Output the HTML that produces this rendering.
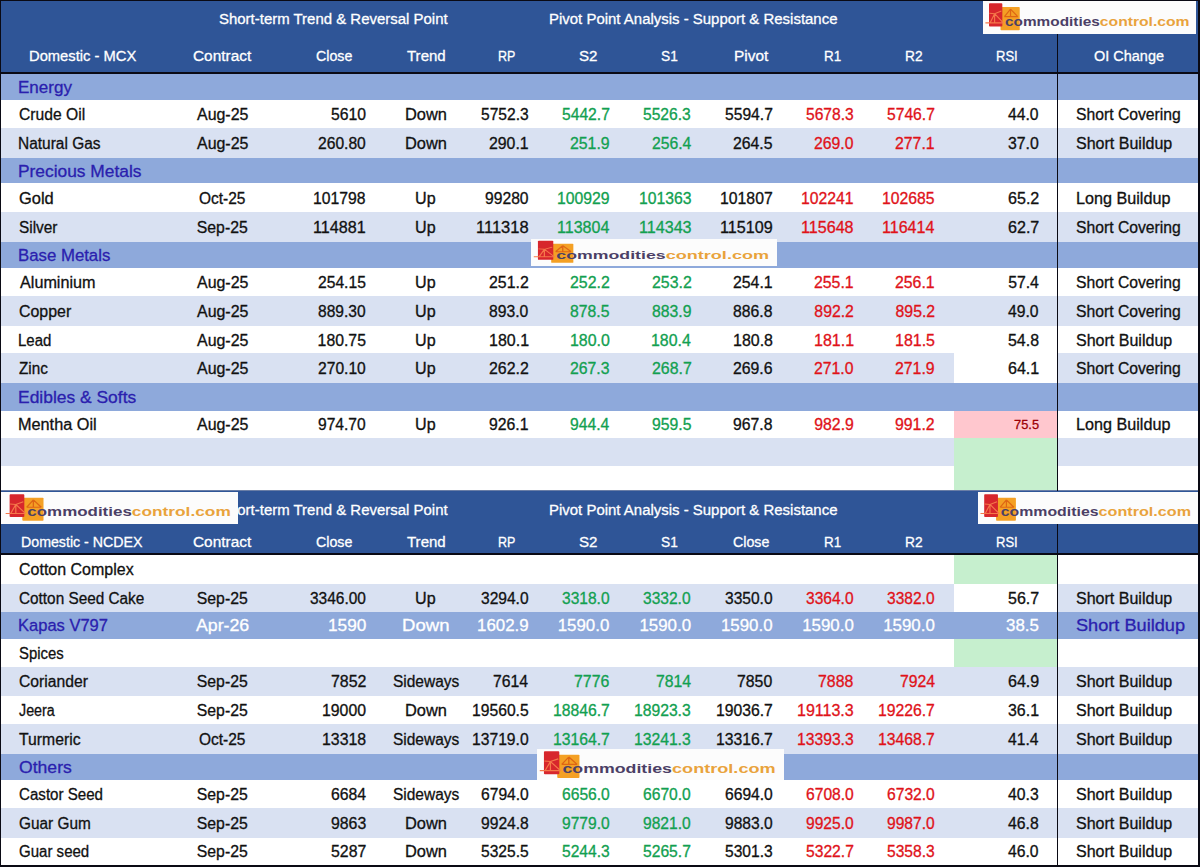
<!DOCTYPE html>
<html><head><meta charset="utf-8"><style>
html,body{margin:0;padding:0;width:1200px;height:867px;overflow:hidden;background:#fff;}
body{position:relative;font-family:"Liberation Sans",sans-serif;}
div,span{position:absolute;}
span{white-space:pre;display:block;}
</style></head><body>
<div style="left:0.00px;top:0.00px;width:1200.00px;height:72.30px;background:#2F5597;"></div>
<span style="left:218.68px;top:-0.60px;height:40px;line-height:40px;font-size:15.5px;color:#FFFFFF;transform:scaleX(0.965);transform-origin:0 0;-webkit-text-stroke:0.3px #FFFFFF;">Short-term Trend &amp; Reversal Point</span>
<span style="left:548.72px;top:-0.60px;height:40px;line-height:40px;font-size:15.5px;color:#FFFFFF;transform:scaleX(0.965);transform-origin:0 0;-webkit-text-stroke:0.3px #FFFFFF;">Pivot Point Analysis - Support &amp; Resistance</span>
<span style="left:28.85px;top:36.00px;height:40px;line-height:40px;font-size:15.5px;color:#FFFFFF;transform:scaleX(0.9508823198831068);transform-origin:0 0;-webkit-text-stroke:0.3px #FFFFFF;">Domestic - MCX</span>
<span style="left:193.21px;top:36.00px;height:40px;line-height:40px;font-size:15.5px;color:#FFFFFF;transform:scaleX(0.9928893513701005);transform-origin:0 0;-webkit-text-stroke:0.3px #FFFFFF;">Contract</span>
<span style="left:315.54px;top:36.00px;height:40px;line-height:40px;font-size:15.5px;color:#FFFFFF;transform:scaleX(0.9160505136426094);transform-origin:0 0;-webkit-text-stroke:0.3px #FFFFFF;">Close</span>
<span style="left:407.20px;top:36.00px;height:40px;line-height:40px;font-size:15.5px;color:#FFFFFF;transform:scaleX(0.969681298080031);transform-origin:0 0;-webkit-text-stroke:0.3px #FFFFFF;">Trend</span>
<span style="left:498.22px;top:36.00px;height:40px;line-height:40px;font-size:15.5px;color:#FFFFFF;transform:scaleX(0.8096645675363066);transform-origin:0 0;-webkit-text-stroke:0.3px #FFFFFF;">RP</span>
<span style="left:579.32px;top:36.00px;height:40px;line-height:40px;font-size:15.5px;color:#FFFFFF;transform:scaleX(0.974910394265233);transform-origin:0 0;-webkit-text-stroke:0.3px #FFFFFF;">S2</span>
<span style="left:661.38px;top:36.00px;height:40px;line-height:40px;font-size:15.5px;color:#FFFFFF;transform:scaleX(0.8849557522123893);transform-origin:0 0;-webkit-text-stroke:0.3px #FFFFFF;">S1</span>
<span style="left:733.76px;top:36.00px;height:40px;line-height:40px;font-size:15.5px;color:#FFFFFF;transform:scaleX(0.9972048047140593);transform-origin:0 0;-webkit-text-stroke:0.3px #FFFFFF;">Pivot</span>
<span style="left:823.92px;top:36.00px;height:40px;line-height:40px;font-size:15.5px;color:#FFFFFF;transform:scaleX(0.8695652173913044);transform-origin:0 0;-webkit-text-stroke:0.3px #FFFFFF;">R1</span>
<span style="left:905.12px;top:36.00px;height:40px;line-height:40px;font-size:15.5px;color:#FFFFFF;transform:scaleX(0.8874489364699254);transform-origin:0 0;-webkit-text-stroke:0.3px #FFFFFF;">R2</span>
<span style="left:995.71px;top:36.00px;height:40px;line-height:40px;font-size:15.5px;color:#FFFFFF;transform:scaleX(0.8415147265077139);transform-origin:0 0;-webkit-text-stroke:0.3px #FFFFFF;">RSI</span>
<span style="left:1094.37px;top:36.00px;height:40px;line-height:40px;font-size:15.5px;color:#FFFFFF;transform:scaleX(0.933786078098472);transform-origin:0 0;-webkit-text-stroke:0.3px #FFFFFF;">OI Change</span>
<div style="left:0.00px;top:72.30px;width:1200.00px;height:2.00px;background:#0a0a14;"></div>
<div style="left:0.00px;top:74.30px;width:1200.00px;height:25.70px;background:#8EA9DB;"></div>
<span style="left:18.24px;top:67.45px;height:40px;line-height:40px;font-size:17.2px;color:#2A20AE;transform:scaleX(0.989689169865282);transform-origin:0 0;-webkit-text-stroke:0.3px #2A20AE;">Energy</span>
<div style="left:0.00px;top:100.00px;width:1200.00px;height:27.60px;background:#FFFFFF;"></div>
<span style="left:18.82px;top:94.90px;height:40px;line-height:40px;font-size:15.8px;color:#111111;transform:scaleX(0.9913813040595753);transform-origin:0 0;-webkit-text-stroke:0.3px #111111;">Crude Oil</span>
<span style="left:196.90px;top:94.90px;height:40px;line-height:40px;font-size:15.8px;color:#111111;transform:scaleX(1.0094);transform-origin:0 0;-webkit-text-stroke:0.3px #111111;">Aug-25</span>
<span style="left:330.77px;top:94.90px;height:40px;line-height:40px;font-size:15.8px;color:#111111;transform:scaleX(0.9979393582572859);transform-origin:0 0;-webkit-text-stroke:0.3px #111111;">5610</span>
<span style="left:404.87px;top:94.90px;height:40px;line-height:40px;font-size:15.8px;color:#111111;transform:scaleX(1.0388);transform-origin:0 0;-webkit-text-stroke:0.3px #111111;">Down</span>
<span style="left:480.68px;top:94.90px;height:40px;line-height:40px;font-size:15.8px;color:#111111;transform:scaleX(0.987596635799847);transform-origin:0 0;-webkit-text-stroke:0.3px #111111;">5752.3</span>
<span style="left:561.67px;top:94.90px;height:40px;line-height:40px;font-size:15.8px;color:#12A050;transform:scaleX(0.9909218769978265);transform-origin:0 0;-webkit-text-stroke:0.3px #12A050;">5442.7</span>
<span style="left:643.38px;top:94.90px;height:40px;line-height:40px;font-size:15.8px;color:#12A050;transform:scaleX(0.987596635799847);transform-origin:0 0;-webkit-text-stroke:0.3px #12A050;">5526.3</span>
<span style="left:724.77px;top:94.90px;height:40px;line-height:40px;font-size:15.8px;color:#111111;transform:scaleX(0.9909218769978265);transform-origin:0 0;-webkit-text-stroke:0.3px #111111;">5594.7</span>
<span style="left:805.98px;top:94.90px;height:40px;line-height:40px;font-size:15.8px;color:#E01219;transform:scaleX(0.987596635799847);transform-origin:0 0;-webkit-text-stroke:0.3px #E01219;">5678.3</span>
<span style="left:887.17px;top:94.90px;height:40px;line-height:40px;font-size:15.8px;color:#E01219;transform:scaleX(0.9909218769978265);transform-origin:0 0;-webkit-text-stroke:0.3px #E01219;">5746.7</span>
<span style="left:1008.49px;top:94.90px;height:40px;line-height:40px;font-size:15.8px;color:#111111;transform:scaleX(0.9945750452079567);transform-origin:0 0;-webkit-text-stroke:0.3px #111111;">44.0</span>
<span style="left:1076.29px;top:94.90px;height:40px;line-height:40px;font-size:15.8px;color:#111111;transform:scaleX(0.9946999999999999);transform-origin:0 0;-webkit-text-stroke:0.3px #111111;">Short Covering</span>
<div style="left:0.00px;top:127.60px;width:1200.00px;height:30.10px;background:#D9E1F2;"></div>
<span style="left:18.36px;top:123.75px;height:40px;line-height:40px;font-size:15.8px;color:#111111;transform:scaleX(0.9796789369028566);transform-origin:0 0;-webkit-text-stroke:0.3px #111111;">Natural Gas</span>
<span style="left:196.90px;top:123.75px;height:40px;line-height:40px;font-size:15.8px;color:#111111;transform:scaleX(1.0094);transform-origin:0 0;-webkit-text-stroke:0.3px #111111;">Aug-25</span>
<span style="left:318.02px;top:123.75px;height:40px;line-height:40px;font-size:15.8px;color:#111111;transform:scaleX(0.9892564620785023);transform-origin:0 0;-webkit-text-stroke:0.3px #111111;">260.80</span>
<span style="left:404.87px;top:123.75px;height:40px;line-height:40px;font-size:15.8px;color:#111111;transform:scaleX(1.0388);transform-origin:0 0;-webkit-text-stroke:0.3px #111111;">Down</span>
<span style="left:488.91px;top:123.75px;height:40px;line-height:40px;font-size:15.8px;color:#111111;transform:scaleX(1.0026579646832812);transform-origin:0 0;-webkit-text-stroke:0.3px #111111;">290.1</span>
<span style="left:569.91px;top:123.75px;height:40px;line-height:40px;font-size:15.8px;color:#12A050;transform:scaleX(1.0026579646832812);transform-origin:0 0;-webkit-text-stroke:0.3px #12A050;">251.9</span>
<span style="left:651.61px;top:123.75px;height:40px;line-height:40px;font-size:15.8px;color:#12A050;transform:scaleX(0.994388620644656);transform-origin:0 0;-webkit-text-stroke:0.3px #12A050;">256.4</span>
<span style="left:733.01px;top:123.75px;height:40px;line-height:40px;font-size:15.8px;color:#111111;-webkit-text-stroke:0.3px #111111;">264.5</span>
<span style="left:814.21px;top:123.75px;height:40px;line-height:40px;font-size:15.8px;color:#E01219;transform:scaleX(0.9985061718688576);transform-origin:0 0;-webkit-text-stroke:0.3px #E01219;">269.0</span>
<span style="left:895.41px;top:123.75px;height:40px;line-height:40px;font-size:15.8px;color:#E01219;transform:scaleX(1.0026579646832812);transform-origin:0 0;-webkit-text-stroke:0.3px #E01219;">277.1</span>
<span style="left:1008.25px;top:123.75px;height:40px;line-height:40px;font-size:15.8px;color:#111111;transform:scaleX(1.0025316455696203);transform-origin:0 0;-webkit-text-stroke:0.3px #111111;">37.0</span>
<span style="left:1076.28px;top:123.75px;height:40px;line-height:40px;font-size:15.8px;color:#111111;transform:scaleX(1.0143);transform-origin:0 0;-webkit-text-stroke:0.3px #111111;">Short Buildup</span>
<div style="left:0.00px;top:157.70px;width:1200.00px;height:25.80px;background:#8EA9DB;"></div>
<span style="left:18.21px;top:150.90px;height:40px;line-height:40px;font-size:17.2px;color:#2A20AE;transform:scaleX(1.0099667774086378);transform-origin:0 0;-webkit-text-stroke:0.3px #2A20AE;">Precious Metals</span>
<div style="left:0.00px;top:183.50px;width:1200.00px;height:28.30px;background:#FFFFFF;"></div>
<span style="left:18.78px;top:178.75px;height:40px;line-height:40px;font-size:15.8px;color:#111111;transform:scaleX(1.0411392405063291);transform-origin:0 0;-webkit-text-stroke:0.3px #111111;">Gold</span>
<span style="left:199.04px;top:178.75px;height:40px;line-height:40px;font-size:15.8px;color:#111111;transform:scaleX(0.98);transform-origin:0 0;-webkit-text-stroke:0.3px #111111;">Oct-25</span>
<span style="left:313.42px;top:178.75px;height:40px;line-height:40px;font-size:15.8px;color:#111111;transform:scaleX(0.9965406085384072);transform-origin:0 0;-webkit-text-stroke:0.3px #111111;">101798</span>
<span style="left:415.45px;top:178.75px;height:40px;line-height:40px;font-size:15.8px;color:#111111;transform:scaleX(1.0192);transform-origin:0 0;-webkit-text-stroke:0.3px #111111;">Up</span>
<span style="left:484.79px;top:178.75px;height:40px;line-height:40px;font-size:15.8px;color:#111111;transform:scaleX(0.991561181434599);transform-origin:0 0;-webkit-text-stroke:0.3px #111111;">99280</span>
<span style="left:556.92px;top:178.75px;height:40px;line-height:40px;font-size:15.8px;color:#12A050;transform:scaleX(0.9980904384117173);transform-origin:0 0;-webkit-text-stroke:0.3px #12A050;">100929</span>
<span style="left:638.62px;top:178.75px;height:40px;line-height:40px;font-size:15.8px;color:#12A050;transform:scaleX(0.9965406085384072);transform-origin:0 0;-webkit-text-stroke:0.3px #12A050;">101363</span>
<span style="left:720.02px;top:178.75px;height:40px;line-height:40px;font-size:15.8px;color:#111111;-webkit-text-stroke:0.3px #111111;">101807</span>
<span style="left:801.22px;top:178.75px;height:40px;line-height:40px;font-size:15.8px;color:#E01219;transform:scaleX(0.9980904384117173);transform-origin:0 0;-webkit-text-stroke:0.3px #E01219;">102241</span>
<span style="left:882.42px;top:178.75px;height:40px;line-height:40px;font-size:15.8px;color:#E01219;transform:scaleX(0.9965406085384072);transform-origin:0 0;-webkit-text-stroke:0.3px #E01219;">102685</span>
<span style="left:1008.00px;top:178.75px;height:40px;line-height:40px;font-size:15.8px;color:#111111;transform:scaleX(1.018832973139858);transform-origin:0 0;-webkit-text-stroke:0.3px #111111;">65.2</span>
<span style="left:1075.71px;top:178.75px;height:40px;line-height:40px;font-size:15.8px;color:#111111;transform:scaleX(1.0241);transform-origin:0 0;-webkit-text-stroke:0.3px #111111;">Long Buildup</span>
<div style="left:0.00px;top:211.80px;width:1200.00px;height:29.90px;background:#D9E1F2;"></div>
<span style="left:18.91px;top:207.85px;height:40px;line-height:40px;font-size:15.8px;color:#111111;transform:scaleX(0.9733115891382567);transform-origin:0 0;-webkit-text-stroke:0.3px #111111;">Silver</span>
<span style="left:196.79px;top:207.85px;height:40px;line-height:40px;font-size:15.8px;color:#111111;-webkit-text-stroke:0.3px #111111;">Sep-25</span>
<span style="left:313.39px;top:207.85px;height:40px;line-height:40px;font-size:15.8px;color:#111111;transform:scaleX(1.021930178182698);transform-origin:0 0;-webkit-text-stroke:0.3px #111111;">114881</span>
<span style="left:415.45px;top:207.85px;height:40px;line-height:40px;font-size:15.8px;color:#111111;transform:scaleX(1.0192);transform-origin:0 0;-webkit-text-stroke:0.3px #111111;">Up</span>
<span style="left:475.86px;top:207.85px;height:40px;line-height:40px;font-size:15.8px;color:#111111;transform:scaleX(1.0452315177503815);transform-origin:0 0;-webkit-text-stroke:0.3px #111111;">111318</span>
<span style="left:556.90px;top:207.85px;height:40px;line-height:40px;font-size:15.8px;color:#12A050;transform:scaleX(1.0154622656625543);transform-origin:0 0;-webkit-text-stroke:0.3px #12A050;">113804</span>
<span style="left:638.59px;top:207.85px;height:40px;line-height:40px;font-size:15.8px;color:#12A050;transform:scaleX(1.0203054879153166);transform-origin:0 0;-webkit-text-stroke:0.3px #12A050;">114343</span>
<span style="left:719.99px;top:207.85px;height:40px;line-height:40px;font-size:15.8px;color:#111111;transform:scaleX(1.021930178182698);transform-origin:0 0;-webkit-text-stroke:0.3px #111111;">115109</span>
<span style="left:801.19px;top:207.85px;height:40px;line-height:40px;font-size:15.8px;color:#E01219;transform:scaleX(1.0203054879153166);transform-origin:0 0;-webkit-text-stroke:0.3px #E01219;">115648</span>
<span style="left:882.40px;top:207.85px;height:40px;line-height:40px;font-size:15.8px;color:#E01219;transform:scaleX(1.0154622656625543);transform-origin:0 0;-webkit-text-stroke:0.3px #E01219;">116414</span>
<span style="left:1008.00px;top:207.85px;height:40px;line-height:40px;font-size:15.8px;color:#111111;transform:scaleX(1.018832973139858);transform-origin:0 0;-webkit-text-stroke:0.3px #111111;">62.7</span>
<span style="left:1076.29px;top:207.85px;height:40px;line-height:40px;font-size:15.8px;color:#111111;transform:scaleX(0.9946999999999999);transform-origin:0 0;-webkit-text-stroke:0.3px #111111;">Short Covering</span>
<div style="left:0.00px;top:241.70px;width:1200.00px;height:26.00px;background:#8EA9DB;"></div>
<span style="left:18.26px;top:235.00px;height:40px;line-height:40px;font-size:17.2px;color:#2A20AE;transform:scaleX(0.976183285153385);transform-origin:0 0;-webkit-text-stroke:0.3px #2A20AE;">Base Metals</span>
<div style="left:0.00px;top:267.70px;width:1200.00px;height:28.30px;background:#FFFFFF;"></div>
<span style="left:19.60px;top:262.95px;height:40px;line-height:40px;font-size:15.8px;color:#111111;transform:scaleX(1.0239283112742064);transform-origin:0 0;-webkit-text-stroke:0.3px #111111;">Aluminium</span>
<span style="left:196.90px;top:262.95px;height:40px;line-height:40px;font-size:15.8px;color:#111111;transform:scaleX(1.0094);transform-origin:0 0;-webkit-text-stroke:0.3px #111111;">Aug-25</span>
<span style="left:318.02px;top:262.95px;height:40px;line-height:40px;font-size:15.8px;color:#111111;transform:scaleX(0.9909218769978263);transform-origin:0 0;-webkit-text-stroke:0.3px #111111;">254.15</span>
<span style="left:415.45px;top:262.95px;height:40px;line-height:40px;font-size:15.8px;color:#111111;transform:scaleX(1.0192);transform-origin:0 0;-webkit-text-stroke:0.3px #111111;">Up</span>
<span style="left:488.91px;top:262.95px;height:40px;line-height:40px;font-size:15.8px;color:#111111;transform:scaleX(1.0047468354430378);transform-origin:0 0;-webkit-text-stroke:0.3px #111111;">251.2</span>
<span style="left:569.91px;top:262.95px;height:40px;line-height:40px;font-size:15.8px;color:#12A050;transform:scaleX(1.0047468354430378);transform-origin:0 0;-webkit-text-stroke:0.3px #12A050;">252.2</span>
<span style="left:651.61px;top:262.95px;height:40px;line-height:40px;font-size:15.8px;color:#12A050;transform:scaleX(1.0047468354430378);transform-origin:0 0;-webkit-text-stroke:0.3px #12A050;">253.2</span>
<span style="left:733.01px;top:262.95px;height:40px;line-height:40px;font-size:15.8px;color:#111111;transform:scaleX(1.0026579646832812);transform-origin:0 0;-webkit-text-stroke:0.3px #111111;">254.1</span>
<span style="left:814.21px;top:262.95px;height:40px;line-height:40px;font-size:15.8px;color:#E01219;transform:scaleX(1.0026579646832812);transform-origin:0 0;-webkit-text-stroke:0.3px #E01219;">255.1</span>
<span style="left:895.41px;top:262.95px;height:40px;line-height:40px;font-size:15.8px;color:#E01219;transform:scaleX(1.0026579646832812);transform-origin:0 0;-webkit-text-stroke:0.3px #E01219;">256.1</span>
<span style="left:1008.17px;top:262.95px;height:40px;line-height:40px;font-size:15.8px;color:#111111;-webkit-text-stroke:0.3px #111111;">57.4</span>
<span style="left:1076.29px;top:262.95px;height:40px;line-height:40px;font-size:15.8px;color:#111111;transform:scaleX(0.9946999999999999);transform-origin:0 0;-webkit-text-stroke:0.3px #111111;">Short Covering</span>
<div style="left:0.00px;top:296.00px;width:1200.00px;height:30.00px;background:#D9E1F2;"></div>
<span style="left:18.80px;top:292.10px;height:40px;line-height:40px;font-size:15.8px;color:#111111;transform:scaleX(1.0089178494792999);transform-origin:0 0;-webkit-text-stroke:0.3px #111111;">Copper</span>
<span style="left:196.90px;top:292.10px;height:40px;line-height:40px;font-size:15.8px;color:#111111;transform:scaleX(1.0094);transform-origin:0 0;-webkit-text-stroke:0.3px #111111;">Aug-25</span>
<span style="left:318.18px;top:292.10px;height:40px;line-height:40px;font-size:15.8px;color:#111111;transform:scaleX(0.9859423700782394);transform-origin:0 0;-webkit-text-stroke:0.3px #111111;">889.30</span>
<span style="left:415.45px;top:292.10px;height:40px;line-height:40px;font-size:15.8px;color:#111111;transform:scaleX(1.0192);transform-origin:0 0;-webkit-text-stroke:0.3px #111111;">Up</span>
<span style="left:489.07px;top:292.10px;height:40px;line-height:40px;font-size:15.8px;color:#111111;transform:scaleX(0.9943886206446563);transform-origin:0 0;-webkit-text-stroke:0.3px #111111;">893.0</span>
<span style="left:570.07px;top:292.10px;height:40px;line-height:40px;font-size:15.8px;color:#12A050;transform:scaleX(0.9964431425881369);transform-origin:0 0;-webkit-text-stroke:0.3px #12A050;">878.5</span>
<span style="left:651.77px;top:292.10px;height:40px;line-height:40px;font-size:15.8px;color:#12A050;transform:scaleX(0.9985061718688576);transform-origin:0 0;-webkit-text-stroke:0.3px #12A050;">883.9</span>
<span style="left:733.17px;top:292.10px;height:40px;line-height:40px;font-size:15.8px;color:#111111;transform:scaleX(0.9964431425881369);transform-origin:0 0;-webkit-text-stroke:0.3px #111111;">886.8</span>
<span style="left:814.37px;top:292.10px;height:40px;line-height:40px;font-size:15.8px;color:#E01219;-webkit-text-stroke:0.3px #E01219;">892.2</span>
<span style="left:895.57px;top:292.10px;height:40px;line-height:40px;font-size:15.8px;color:#E01219;-webkit-text-stroke:0.3px #E01219;">895.2</span>
<span style="left:1008.49px;top:292.10px;height:40px;line-height:40px;font-size:15.8px;color:#111111;transform:scaleX(0.9945750452079567);transform-origin:0 0;-webkit-text-stroke:0.3px #111111;">49.0</span>
<span style="left:1076.29px;top:292.10px;height:40px;line-height:40px;font-size:15.8px;color:#111111;transform:scaleX(0.9946999999999999);transform-origin:0 0;-webkit-text-stroke:0.3px #111111;">Short Covering</span>
<div style="left:0.00px;top:326.00px;width:1200.00px;height:27.00px;background:#FFFFFF;"></div>
<span style="left:18.40px;top:320.60px;height:40px;line-height:40px;font-size:15.8px;color:#111111;transform:scaleX(0.9486082020459582);transform-origin:0 0;-webkit-text-stroke:0.3px #111111;">Lead</span>
<span style="left:196.90px;top:320.60px;height:40px;line-height:40px;font-size:15.8px;color:#111111;transform:scaleX(1.0094);transform-origin:0 0;-webkit-text-stroke:0.3px #111111;">Aug-25</span>
<span style="left:317.62px;top:320.60px;height:40px;line-height:40px;font-size:15.8px;color:#111111;-webkit-text-stroke:0.3px #111111;">180.75</span>
<span style="left:415.45px;top:320.60px;height:40px;line-height:40px;font-size:15.8px;color:#111111;transform:scaleX(1.0192);transform-origin:0 0;-webkit-text-stroke:0.3px #111111;">Up</span>
<span style="left:488.50px;top:320.60px;height:40px;line-height:40px;font-size:15.8px;color:#111111;transform:scaleX(1.0131900861610468);transform-origin:0 0;-webkit-text-stroke:0.3px #111111;">180.1</span>
<span style="left:569.50px;top:320.60px;height:40px;line-height:40px;font-size:15.8px;color:#12A050;transform:scaleX(1.0089507970976115);transform-origin:0 0;-webkit-text-stroke:0.3px #12A050;">180.0</span>
<span style="left:651.21px;top:320.60px;height:40px;line-height:40px;font-size:15.8px;color:#12A050;transform:scaleX(1.004746835443038);transform-origin:0 0;-webkit-text-stroke:0.3px #12A050;">180.4</span>
<span style="left:732.60px;top:320.60px;height:40px;line-height:40px;font-size:15.8px;color:#111111;transform:scaleX(1.011065997930101);transform-origin:0 0;-webkit-text-stroke:0.3px #111111;">180.8</span>
<span style="left:813.80px;top:320.60px;height:40px;line-height:40px;font-size:15.8px;color:#E01219;transform:scaleX(1.0131900861610468);transform-origin:0 0;-webkit-text-stroke:0.3px #E01219;">181.1</span>
<span style="left:895.00px;top:320.60px;height:40px;line-height:40px;font-size:15.8px;color:#E01219;transform:scaleX(1.011065997930101);transform-origin:0 0;-webkit-text-stroke:0.3px #E01219;">181.5</span>
<span style="left:1008.16px;top:320.60px;height:40px;line-height:40px;font-size:15.8px;color:#111111;transform:scaleX(1.0079071503716022);transform-origin:0 0;-webkit-text-stroke:0.3px #111111;">54.8</span>
<span style="left:1076.28px;top:320.60px;height:40px;line-height:40px;font-size:15.8px;color:#111111;transform:scaleX(1.0143);transform-origin:0 0;-webkit-text-stroke:0.3px #111111;">Short Buildup</span>
<div style="left:0.00px;top:353.00px;width:1200.00px;height:30.00px;background:#D9E1F2;"></div>
<div style="left:953.60px;top:353.00px;width:103.00px;height:30.00px;background:#FFFFFF;"></div>
<span style="left:19.14px;top:349.10px;height:40px;line-height:40px;font-size:15.8px;color:#111111;transform:scaleX(0.9657503535336115);transform-origin:0 0;-webkit-text-stroke:0.3px #111111;">Zinc</span>
<span style="left:196.90px;top:349.10px;height:40px;line-height:40px;font-size:15.8px;color:#111111;transform:scaleX(1.0094);transform-origin:0 0;-webkit-text-stroke:0.3px #111111;">Aug-25</span>
<span style="left:318.02px;top:349.10px;height:40px;line-height:40px;font-size:15.8px;color:#111111;transform:scaleX(0.9892564620785023);transform-origin:0 0;-webkit-text-stroke:0.3px #111111;">270.10</span>
<span style="left:415.45px;top:349.10px;height:40px;line-height:40px;font-size:15.8px;color:#111111;transform:scaleX(1.0192);transform-origin:0 0;-webkit-text-stroke:0.3px #111111;">Up</span>
<span style="left:488.91px;top:349.10px;height:40px;line-height:40px;font-size:15.8px;color:#111111;transform:scaleX(1.0047468354430378);transform-origin:0 0;-webkit-text-stroke:0.3px #111111;">262.2</span>
<span style="left:569.91px;top:349.10px;height:40px;line-height:40px;font-size:15.8px;color:#12A050;-webkit-text-stroke:0.3px #12A050;">267.3</span>
<span style="left:651.61px;top:349.10px;height:40px;line-height:40px;font-size:15.8px;color:#12A050;transform:scaleX(1.0047468354430378);transform-origin:0 0;-webkit-text-stroke:0.3px #12A050;">268.7</span>
<span style="left:733.01px;top:349.10px;height:40px;line-height:40px;font-size:15.8px;color:#111111;-webkit-text-stroke:0.3px #111111;">269.6</span>
<span style="left:814.21px;top:349.10px;height:40px;line-height:40px;font-size:15.8px;color:#E01219;transform:scaleX(0.9985061718688576);transform-origin:0 0;-webkit-text-stroke:0.3px #E01219;">271.0</span>
<span style="left:895.41px;top:349.10px;height:40px;line-height:40px;font-size:15.8px;color:#E01219;transform:scaleX(1.0026579646832812);transform-origin:0 0;-webkit-text-stroke:0.3px #E01219;">271.9</span>
<span style="left:1008.00px;top:349.10px;height:40px;line-height:40px;font-size:15.8px;color:#111111;transform:scaleX(1.0160793705097504);transform-origin:0 0;-webkit-text-stroke:0.3px #111111;">64.1</span>
<span style="left:1076.29px;top:349.10px;height:40px;line-height:40px;font-size:15.8px;color:#111111;transform:scaleX(0.9946999999999999);transform-origin:0 0;-webkit-text-stroke:0.3px #111111;">Short Covering</span>
<div style="left:0.00px;top:383.00px;width:1200.00px;height:27.50px;background:#8EA9DB;"></div>
<span style="left:18.20px;top:377.05px;height:40px;line-height:40px;font-size:17.2px;color:#2A20AE;transform:scaleX(1.014061654948621);transform-origin:0 0;-webkit-text-stroke:0.3px #2A20AE;">Edibles &amp; Softs</span>
<div style="left:0.00px;top:410.50px;width:1200.00px;height:27.00px;background:#FFFFFF;"></div>
<div style="left:953.60px;top:410.50px;width:103.00px;height:27.00px;background:#FFC7CE;"></div>
<span style="left:18.30px;top:405.10px;height:40px;line-height:40px;font-size:15.8px;color:#111111;transform:scaleX(1.0289870718739036);transform-origin:0 0;-webkit-text-stroke:0.3px #111111;">Mentha Oil</span>
<span style="left:196.90px;top:405.10px;height:40px;line-height:40px;font-size:15.8px;color:#111111;transform:scaleX(1.0094);transform-origin:0 0;-webkit-text-stroke:0.3px #111111;">Aug-25</span>
<span style="left:318.10px;top:405.10px;height:40px;line-height:40px;font-size:15.8px;color:#111111;transform:scaleX(0.987596635799847);transform-origin:0 0;-webkit-text-stroke:0.3px #111111;">974.70</span>
<span style="left:415.45px;top:405.10px;height:40px;line-height:40px;font-size:15.8px;color:#111111;transform:scaleX(1.0192);transform-origin:0 0;-webkit-text-stroke:0.3px #111111;">Up</span>
<span style="left:488.99px;top:405.10px;height:40px;line-height:40px;font-size:15.8px;color:#111111;-webkit-text-stroke:0.3px #111111;">926.1</span>
<span style="left:569.99px;top:405.10px;height:40px;line-height:40px;font-size:15.8px;color:#12A050;transform:scaleX(0.992342553523988);transform-origin:0 0;-webkit-text-stroke:0.3px #12A050;">944.4</span>
<span style="left:651.69px;top:405.10px;height:40px;line-height:40px;font-size:15.8px;color:#12A050;transform:scaleX(0.9985061718688576);transform-origin:0 0;-webkit-text-stroke:0.3px #12A050;">959.5</span>
<span style="left:733.09px;top:405.10px;height:40px;line-height:40px;font-size:15.8px;color:#111111;transform:scaleX(0.9985061718688576);transform-origin:0 0;-webkit-text-stroke:0.3px #111111;">967.8</span>
<span style="left:814.29px;top:405.10px;height:40px;line-height:40px;font-size:15.8px;color:#E01219;-webkit-text-stroke:0.3px #E01219;">982.9</span>
<span style="left:895.49px;top:405.10px;height:40px;line-height:40px;font-size:15.8px;color:#E01219;transform:scaleX(1.0026579646832812);transform-origin:0 0;-webkit-text-stroke:0.3px #E01219;">991.2</span>
<span style="left:1014.12px;top:404.50px;height:40px;line-height:40px;font-size:12.8px;color:#9C0006;-webkit-text-stroke:0.3px #9C0006;">75.5</span>
<span style="left:1075.71px;top:405.10px;height:40px;line-height:40px;font-size:15.8px;color:#111111;transform:scaleX(1.0241);transform-origin:0 0;-webkit-text-stroke:0.3px #111111;">Long Buildup</span>
<div style="left:0.00px;top:437.50px;width:1200.00px;height:28.20px;background:#D9E1F2;"></div>
<div style="left:953.60px;top:437.50px;width:103.00px;height:28.20px;background:#C6EFCE;"></div>
<div style="left:0.00px;top:465.70px;width:1200.00px;height:24.30px;background:#FFFFFF;"></div>
<div style="left:953.60px;top:465.70px;width:103.00px;height:24.30px;background:#C6EFCE;"></div>
<div style="left:0.00px;top:490.00px;width:1200.00px;height:1.30px;background:#6a7ea6;"></div>
<div style="left:0.00px;top:491.30px;width:1200.00px;height:61.70px;background:#2F5597;"></div>
<span style="left:218.68px;top:490.30px;height:40px;line-height:40px;font-size:15.5px;color:#FFFFFF;transform:scaleX(0.965);transform-origin:0 0;-webkit-text-stroke:0.3px #FFFFFF;">Short-term Trend &amp; Reversal Point</span>
<span style="left:548.72px;top:490.30px;height:40px;line-height:40px;font-size:15.5px;color:#FFFFFF;transform:scaleX(0.965);transform-origin:0 0;-webkit-text-stroke:0.3px #FFFFFF;">Pivot Point Analysis - Support &amp; Resistance</span>
<span style="left:21.36px;top:521.60px;height:40px;line-height:40px;font-size:15.5px;color:#FFFFFF;transform:scaleX(0.9156635699433433);transform-origin:0 0;-webkit-text-stroke:0.3px #FFFFFF;">Domestic - NCDEX</span>
<span style="left:193.21px;top:521.60px;height:40px;line-height:40px;font-size:15.5px;color:#FFFFFF;transform:scaleX(0.9928893513701005);transform-origin:0 0;-webkit-text-stroke:0.3px #FFFFFF;">Contract</span>
<span style="left:315.54px;top:521.60px;height:40px;line-height:40px;font-size:15.5px;color:#FFFFFF;transform:scaleX(0.9160505136426094);transform-origin:0 0;-webkit-text-stroke:0.3px #FFFFFF;">Close</span>
<span style="left:407.20px;top:521.60px;height:40px;line-height:40px;font-size:15.5px;color:#FFFFFF;transform:scaleX(0.969681298080031);transform-origin:0 0;-webkit-text-stroke:0.3px #FFFFFF;">Trend</span>
<span style="left:498.22px;top:521.60px;height:40px;line-height:40px;font-size:15.5px;color:#FFFFFF;transform:scaleX(0.8096645675363066);transform-origin:0 0;-webkit-text-stroke:0.3px #FFFFFF;">RP</span>
<span style="left:579.32px;top:521.60px;height:40px;line-height:40px;font-size:15.5px;color:#FFFFFF;transform:scaleX(0.974910394265233);transform-origin:0 0;-webkit-text-stroke:0.3px #FFFFFF;">S2</span>
<span style="left:661.38px;top:521.60px;height:40px;line-height:40px;font-size:15.5px;color:#FFFFFF;transform:scaleX(0.8849557522123893);transform-origin:0 0;-webkit-text-stroke:0.3px #FFFFFF;">S1</span>
<span style="left:733.09px;top:521.60px;height:40px;line-height:40px;font-size:15.5px;color:#FFFFFF;transform:scaleX(0.9160505136426094);transform-origin:0 0;-webkit-text-stroke:0.3px #FFFFFF;">Close</span>
<span style="left:823.92px;top:521.60px;height:40px;line-height:40px;font-size:15.5px;color:#FFFFFF;transform:scaleX(0.8695652173913044);transform-origin:0 0;-webkit-text-stroke:0.3px #FFFFFF;">R1</span>
<span style="left:905.12px;top:521.60px;height:40px;line-height:40px;font-size:15.5px;color:#FFFFFF;transform:scaleX(0.8874489364699254);transform-origin:0 0;-webkit-text-stroke:0.3px #FFFFFF;">R2</span>
<span style="left:995.71px;top:521.60px;height:40px;line-height:40px;font-size:15.5px;color:#FFFFFF;transform:scaleX(0.8415147265077139);transform-origin:0 0;-webkit-text-stroke:0.3px #FFFFFF;">RSI</span>
<div style="left:0.00px;top:553.00px;width:1200.00px;height:2.00px;background:#0a0a14;"></div>
<div style="left:0.00px;top:555.00px;width:1200.00px;height:28.70px;background:#FFFFFF;"></div>
<div style="left:953.60px;top:555.00px;width:103.00px;height:28.70px;background:#C6EFCE;"></div>
<span style="left:18.80px;top:550.45px;height:40px;line-height:40px;font-size:15.8px;color:#111111;transform:scaleX(1.012124125407253);transform-origin:0 0;-webkit-text-stroke:0.3px #111111;">Cotton Complex</span>
<div style="left:0.00px;top:583.70px;width:1200.00px;height:28.60px;background:#D9E1F2;"></div>
<div style="left:953.60px;top:583.70px;width:103.00px;height:28.60px;background:#FFFFFF;"></div>
<span style="left:18.83px;top:579.10px;height:40px;line-height:40px;font-size:15.8px;color:#111111;transform:scaleX(0.9705163554330117);transform-origin:0 0;-webkit-text-stroke:0.3px #111111;">Cotton Seed Cake</span>
<span style="left:196.79px;top:579.10px;height:40px;line-height:40px;font-size:15.8px;color:#111111;-webkit-text-stroke:0.3px #111111;">Sep-25</span>
<span style="left:309.86px;top:579.10px;height:40px;line-height:40px;font-size:15.8px;color:#111111;transform:scaleX(0.980164610522933);transform-origin:0 0;-webkit-text-stroke:0.3px #111111;">3346.00</span>
<span style="left:415.45px;top:579.10px;height:40px;line-height:40px;font-size:15.8px;color:#111111;transform:scaleX(1.0192);transform-origin:0 0;-webkit-text-stroke:0.3px #111111;">Up</span>
<span style="left:480.76px;top:579.10px;height:40px;line-height:40px;font-size:15.8px;color:#111111;transform:scaleX(0.9842936370179078);transform-origin:0 0;-webkit-text-stroke:0.3px #111111;">3294.0</span>
<span style="left:561.76px;top:579.10px;height:40px;line-height:40px;font-size:15.8px;color:#12A050;transform:scaleX(0.9842936370179078);transform-origin:0 0;-webkit-text-stroke:0.3px #12A050;">3318.0</span>
<span style="left:643.46px;top:579.10px;height:40px;line-height:40px;font-size:15.8px;color:#12A050;transform:scaleX(0.9842936370179078);transform-origin:0 0;-webkit-text-stroke:0.3px #12A050;">3332.0</span>
<span style="left:724.86px;top:579.10px;height:40px;line-height:40px;font-size:15.8px;color:#111111;transform:scaleX(0.9842936370179078);transform-origin:0 0;-webkit-text-stroke:0.3px #111111;">3350.0</span>
<span style="left:806.06px;top:579.10px;height:40px;line-height:40px;font-size:15.8px;color:#E01219;transform:scaleX(0.9842936370179078);transform-origin:0 0;-webkit-text-stroke:0.3px #E01219;">3364.0</span>
<span style="left:887.26px;top:579.10px;height:40px;line-height:40px;font-size:15.8px;color:#E01219;transform:scaleX(0.9842936370179078);transform-origin:0 0;-webkit-text-stroke:0.3px #E01219;">3382.0</span>
<span style="left:1008.16px;top:579.10px;height:40px;line-height:40px;font-size:15.8px;color:#111111;transform:scaleX(1.0133406120986728);transform-origin:0 0;-webkit-text-stroke:0.3px #111111;">56.7</span>
<span style="left:1076.28px;top:579.10px;height:40px;line-height:40px;font-size:15.8px;color:#111111;transform:scaleX(1.0143);transform-origin:0 0;-webkit-text-stroke:0.3px #111111;">Short Buildup</span>
<div style="left:0.00px;top:612.30px;width:1200.00px;height:26.70px;background:#8EA9DB;"></div>
<span style="left:18.28px;top:605.65px;height:40px;line-height:40px;font-size:16.9px;color:#2A20AE;transform:scaleX(0.9776660586377186);transform-origin:0 0;-webkit-text-stroke:0.3px #2A20AE;">Kapas V797</span>
<span style="left:196.24px;top:605.65px;height:40px;line-height:40px;font-size:16.9px;color:#FFFFFF;transform:scaleX(1.05);transform-origin:0 0;-webkit-text-stroke:0.3px #FFFFFF;">Apr-26</span>
<span style="left:327.71px;top:605.65px;height:40px;line-height:40px;font-size:16.9px;color:#FFFFFF;transform:scaleX(1.0211646872858005);transform-origin:0 0;-webkit-text-stroke:0.3px #FFFFFF;">1590</span>
<span style="left:401.97px;top:605.65px;height:40px;line-height:40px;font-size:16.9px;color:#FFFFFF;transform:scaleX(1.1);transform-origin:0 0;-webkit-text-stroke:0.3px #FFFFFF;">Down</span>
<span style="left:477.05px;top:605.65px;height:40px;line-height:40px;font-size:16.9px;color:#FFFFFF;-webkit-text-stroke:0.3px #FFFFFF;">1602.9</span>
<span style="left:557.68px;top:605.65px;height:40px;line-height:40px;font-size:16.9px;color:#FFFFFF;-webkit-text-stroke:0.3px #FFFFFF;">1590.0</span>
<span style="left:639.38px;top:605.65px;height:40px;line-height:40px;font-size:16.9px;color:#FFFFFF;-webkit-text-stroke:0.3px #FFFFFF;">1590.0</span>
<span style="left:720.88px;top:605.65px;height:40px;line-height:40px;font-size:16.9px;color:#FFFFFF;-webkit-text-stroke:0.3px #FFFFFF;">1590.0</span>
<span style="left:802.13px;top:605.65px;height:40px;line-height:40px;font-size:16.9px;color:#FFFFFF;-webkit-text-stroke:0.3px #FFFFFF;">1590.0</span>
<span style="left:883.18px;top:605.65px;height:40px;line-height:40px;font-size:16.9px;color:#FFFFFF;-webkit-text-stroke:0.3px #FFFFFF;">1590.0</span>
<span style="left:1006.01px;top:605.65px;height:40px;line-height:40px;font-size:16.9px;color:#FFFFFF;-webkit-text-stroke:0.3px #FFFFFF;">38.5</span>
<span style="left:1076.18px;top:605.65px;height:40px;line-height:40px;font-size:16.9px;color:#2A20AE;transform:scaleX(1.075);transform-origin:0 0;-webkit-text-stroke:0.3px #2A20AE;">Short Buildup</span>
<div style="left:0.00px;top:639.00px;width:1200.00px;height:27.60px;background:#FFFFFF;"></div>
<div style="left:953.60px;top:639.00px;width:103.00px;height:27.60px;background:#C6EFCE;"></div>
<span style="left:18.93px;top:633.90px;height:40px;line-height:40px;font-size:15.8px;color:#111111;transform:scaleX(0.9428645743020634);transform-origin:0 0;-webkit-text-stroke:0.3px #111111;">Spices</span>
<div style="left:0.00px;top:666.60px;width:1200.00px;height:29.10px;background:#D9E1F2;"></div>
<span style="left:18.81px;top:662.25px;height:40px;line-height:40px;font-size:15.8px;color:#111111;transform:scaleX(0.993948607010261);transform-origin:0 0;-webkit-text-stroke:0.3px #111111;">Coriander</span>
<span style="left:196.79px;top:662.25px;height:40px;line-height:40px;font-size:15.8px;color:#111111;-webkit-text-stroke:0.3px #111111;">Sep-25</span>
<span style="left:330.60px;top:662.25px;height:40px;line-height:40px;font-size:15.8px;color:#111111;transform:scaleX(1.0096798212956066);transform-origin:0 0;-webkit-text-stroke:0.3px #111111;">7852</span>
<span style="left:392.79px;top:662.25px;height:40px;line-height:40px;font-size:15.8px;color:#111111;transform:scaleX(0.98);transform-origin:0 0;-webkit-text-stroke:0.3px #111111;">Sideways</span>
<span style="left:493.11px;top:662.25px;height:40px;line-height:40px;font-size:15.8px;color:#111111;transform:scaleX(0.9979393582572856);transform-origin:0 0;-webkit-text-stroke:0.3px #111111;">7614</span>
<span style="left:574.11px;top:662.25px;height:40px;line-height:40px;font-size:15.8px;color:#12A050;transform:scaleX(1.0049506418047607);transform-origin:0 0;-webkit-text-stroke:0.3px #12A050;">7776</span>
<span style="left:655.81px;top:662.25px;height:40px;line-height:40px;font-size:15.8px;color:#12A050;transform:scaleX(0.9979393582572856);transform-origin:0 0;-webkit-text-stroke:0.3px #12A050;">7814</span>
<span style="left:737.21px;top:662.25px;height:40px;line-height:40px;font-size:15.8px;color:#111111;transform:scaleX(1.0026026262865253);transform-origin:0 0;-webkit-text-stroke:0.3px #111111;">7850</span>
<span style="left:818.41px;top:662.25px;height:40px;line-height:40px;font-size:15.8px;color:#E01219;transform:scaleX(1.0049506418047607);transform-origin:0 0;-webkit-text-stroke:0.3px #E01219;">7888</span>
<span style="left:899.61px;top:662.25px;height:40px;line-height:40px;font-size:15.8px;color:#E01219;transform:scaleX(0.9979393582572856);transform-origin:0 0;-webkit-text-stroke:0.3px #E01219;">7924</span>
<span style="left:1008.00px;top:662.25px;height:40px;line-height:40px;font-size:15.8px;color:#111111;transform:scaleX(1.0160793705097504);transform-origin:0 0;-webkit-text-stroke:0.3px #111111;">64.9</span>
<span style="left:1076.28px;top:662.25px;height:40px;line-height:40px;font-size:15.8px;color:#111111;transform:scaleX(1.0143);transform-origin:0 0;-webkit-text-stroke:0.3px #111111;">Short Buildup</span>
<div style="left:0.00px;top:695.70px;width:1200.00px;height:28.10px;background:#FFFFFF;"></div>
<span style="left:19.39px;top:690.85px;height:40px;line-height:40px;font-size:15.8px;color:#111111;transform:scaleX(0.9041591320072333);transform-origin:0 0;-webkit-text-stroke:0.3px #111111;">Jeera</span>
<span style="left:196.79px;top:690.85px;height:40px;line-height:40px;font-size:15.8px;color:#111111;-webkit-text-stroke:0.3px #111111;">Sep-25</span>
<span style="left:321.81px;top:690.85px;height:40px;line-height:40px;font-size:15.8px;color:#111111;transform:scaleX(1.0027023183046508);transform-origin:0 0;-webkit-text-stroke:0.3px #111111;">19000</span>
<span style="left:404.87px;top:690.85px;height:40px;line-height:40px;font-size:15.8px;color:#111111;transform:scaleX(1.0388);transform-origin:0 0;-webkit-text-stroke:0.3px #111111;">Down</span>
<span style="left:471.72px;top:690.85px;height:40px;line-height:40px;font-size:15.8px;color:#111111;transform:scaleX(0.9927667269439422);transform-origin:0 0;-webkit-text-stroke:0.3px #111111;">19560.5</span>
<span style="left:552.72px;top:690.85px;height:40px;line-height:40px;font-size:15.8px;color:#12A050;transform:scaleX(0.995611330746074);transform-origin:0 0;-webkit-text-stroke:0.3px #12A050;">18846.7</span>
<span style="left:634.42px;top:690.85px;height:40px;line-height:40px;font-size:15.8px;color:#12A050;transform:scaleX(0.9927667269439422);transform-origin:0 0;-webkit-text-stroke:0.3px #12A050;">18923.3</span>
<span style="left:715.82px;top:690.85px;height:40px;line-height:40px;font-size:15.8px;color:#111111;transform:scaleX(0.995611330746074);transform-origin:0 0;-webkit-text-stroke:0.3px #111111;">19036.7</span>
<span style="left:797.00px;top:690.85px;height:40px;line-height:40px;font-size:15.8px;color:#E01219;transform:scaleX(1.0145061443222767);transform-origin:0 0;-webkit-text-stroke:0.3px #E01219;">19113.3</span>
<span style="left:878.22px;top:690.85px;height:40px;line-height:40px;font-size:15.8px;color:#E01219;transform:scaleX(0.995611330746074);transform-origin:0 0;-webkit-text-stroke:0.3px #E01219;">19226.7</span>
<span style="left:1008.24px;top:690.85px;height:40px;line-height:40px;font-size:15.8px;color:#111111;transform:scaleX(1.0079071503716022);transform-origin:0 0;-webkit-text-stroke:0.3px #111111;">36.1</span>
<span style="left:1076.28px;top:690.85px;height:40px;line-height:40px;font-size:15.8px;color:#111111;transform:scaleX(1.0143);transform-origin:0 0;-webkit-text-stroke:0.3px #111111;">Short Buildup</span>
<div style="left:0.00px;top:723.80px;width:1200.00px;height:29.90px;background:#D9E1F2;"></div>
<span style="left:19.28px;top:719.85px;height:40px;line-height:40px;font-size:15.8px;color:#111111;transform:scaleX(0.9969174263789597);transform-origin:0 0;-webkit-text-stroke:0.3px #111111;">Turmeric</span>
<span style="left:199.04px;top:719.85px;height:40px;line-height:40px;font-size:15.8px;color:#111111;transform:scaleX(0.98);transform-origin:0 0;-webkit-text-stroke:0.3px #111111;">Oct-25</span>
<span style="left:321.81px;top:719.85px;height:40px;line-height:40px;font-size:15.8px;color:#111111;transform:scaleX(1.0045835609281117);transform-origin:0 0;-webkit-text-stroke:0.3px #111111;">13318</span>
<span style="left:392.79px;top:719.85px;height:40px;line-height:40px;font-size:15.8px;color:#111111;transform:scaleX(0.98);transform-origin:0 0;-webkit-text-stroke:0.3px #111111;">Sideways</span>
<span style="left:471.73px;top:719.85px;height:40px;line-height:40px;font-size:15.8px;color:#111111;transform:scaleX(0.9913505119269038);transform-origin:0 0;-webkit-text-stroke:0.3px #111111;">13719.0</span>
<span style="left:552.72px;top:719.85px;height:40px;line-height:40px;font-size:15.8px;color:#12A050;transform:scaleX(0.995611330746074);transform-origin:0 0;-webkit-text-stroke:0.3px #12A050;">13164.7</span>
<span style="left:634.42px;top:719.85px;height:40px;line-height:40px;font-size:15.8px;color:#12A050;transform:scaleX(0.9927667269439422);transform-origin:0 0;-webkit-text-stroke:0.3px #12A050;">13241.3</span>
<span style="left:715.82px;top:719.85px;height:40px;line-height:40px;font-size:15.8px;color:#111111;transform:scaleX(0.995611330746074);transform-origin:0 0;-webkit-text-stroke:0.3px #111111;">13316.7</span>
<span style="left:797.02px;top:719.85px;height:40px;line-height:40px;font-size:15.8px;color:#E01219;transform:scaleX(0.9927667269439422);transform-origin:0 0;-webkit-text-stroke:0.3px #E01219;">13393.3</span>
<span style="left:878.22px;top:719.85px;height:40px;line-height:40px;font-size:15.8px;color:#E01219;transform:scaleX(0.995611330746074);transform-origin:0 0;-webkit-text-stroke:0.3px #E01219;">13468.7</span>
<span style="left:1008.49px;top:719.85px;height:40px;line-height:40px;font-size:15.8px;color:#111111;transform:scaleX(0.9893404397068623);transform-origin:0 0;-webkit-text-stroke:0.3px #111111;">41.4</span>
<span style="left:1076.28px;top:719.85px;height:40px;line-height:40px;font-size:15.8px;color:#111111;transform:scaleX(1.0143);transform-origin:0 0;-webkit-text-stroke:0.3px #111111;">Short Buildup</span>
<div style="left:0.00px;top:753.70px;width:1200.00px;height:26.10px;background:#8EA9DB;"></div>
<span style="left:18.81px;top:747.05px;height:40px;line-height:40px;font-size:17.2px;color:#2A20AE;transform:scaleX(1.0234151003504302);transform-origin:0 0;-webkit-text-stroke:0.3px #2A20AE;">Others</span>
<div style="left:0.00px;top:779.80px;width:1200.00px;height:28.20px;background:#FFFFFF;"></div>
<span style="left:18.84px;top:775.00px;height:40px;line-height:40px;font-size:15.8px;color:#111111;transform:scaleX(0.956915573104169);transform-origin:0 0;-webkit-text-stroke:0.3px #111111;">Castor Seed</span>
<span style="left:196.79px;top:775.00px;height:40px;line-height:40px;font-size:15.8px;color:#111111;-webkit-text-stroke:0.3px #111111;">Sep-25</span>
<span style="left:330.61px;top:775.00px;height:40px;line-height:40px;font-size:15.8px;color:#111111;transform:scaleX(0.9979393582572856);transform-origin:0 0;-webkit-text-stroke:0.3px #111111;">6684</span>
<span style="left:392.79px;top:775.00px;height:40px;line-height:40px;font-size:15.8px;color:#111111;transform:scaleX(0.98);transform-origin:0 0;-webkit-text-stroke:0.3px #111111;">Sideways</span>
<span style="left:480.52px;top:775.00px;height:40px;line-height:40px;font-size:15.8px;color:#111111;transform:scaleX(0.9892564620785023);transform-origin:0 0;-webkit-text-stroke:0.3px #111111;">6794.0</span>
<span style="left:561.52px;top:775.00px;height:40px;line-height:40px;font-size:15.8px;color:#12A050;transform:scaleX(0.9892564620785023);transform-origin:0 0;-webkit-text-stroke:0.3px #12A050;">6656.0</span>
<span style="left:643.22px;top:775.00px;height:40px;line-height:40px;font-size:15.8px;color:#12A050;transform:scaleX(0.9892564620785023);transform-origin:0 0;-webkit-text-stroke:0.3px #12A050;">6670.0</span>
<span style="left:724.62px;top:775.00px;height:40px;line-height:40px;font-size:15.8px;color:#111111;transform:scaleX(0.9892564620785023);transform-origin:0 0;-webkit-text-stroke:0.3px #111111;">6694.0</span>
<span style="left:805.82px;top:775.00px;height:40px;line-height:40px;font-size:15.8px;color:#E01219;transform:scaleX(0.9892564620785023);transform-origin:0 0;-webkit-text-stroke:0.3px #E01219;">6708.0</span>
<span style="left:887.02px;top:775.00px;height:40px;line-height:40px;font-size:15.8px;color:#E01219;transform:scaleX(0.9892564620785023);transform-origin:0 0;-webkit-text-stroke:0.3px #E01219;">6732.0</span>
<span style="left:1008.48px;top:775.00px;height:40px;line-height:40px;font-size:15.8px;color:#111111;transform:scaleX(0.9972131753013465);transform-origin:0 0;-webkit-text-stroke:0.3px #111111;">40.3</span>
<span style="left:1076.28px;top:775.00px;height:40px;line-height:40px;font-size:15.8px;color:#111111;transform:scaleX(1.0143);transform-origin:0 0;-webkit-text-stroke:0.3px #111111;">Short Buildup</span>
<div style="left:0.00px;top:808.00px;width:1200.00px;height:29.50px;background:#D9E1F2;"></div>
<span style="left:18.83px;top:803.85px;height:40px;line-height:40px;font-size:15.8px;color:#111111;transform:scaleX(0.9726409982075614);transform-origin:0 0;-webkit-text-stroke:0.3px #111111;">Guar Gum</span>
<span style="left:196.79px;top:803.85px;height:40px;line-height:40px;font-size:15.8px;color:#111111;-webkit-text-stroke:0.3px #111111;">Sep-25</span>
<span style="left:330.69px;top:803.85px;height:40px;line-height:40px;font-size:15.8px;color:#111111;transform:scaleX(1.0026026262865253);transform-origin:0 0;-webkit-text-stroke:0.3px #111111;">9863</span>
<span style="left:404.87px;top:803.85px;height:40px;line-height:40px;font-size:15.8px;color:#111111;transform:scaleX(1.0388);transform-origin:0 0;-webkit-text-stroke:0.3px #111111;">Down</span>
<span style="left:480.60px;top:803.85px;height:40px;line-height:40px;font-size:15.8px;color:#111111;transform:scaleX(0.9892564620785023);transform-origin:0 0;-webkit-text-stroke:0.3px #111111;">9924.8</span>
<span style="left:561.60px;top:803.85px;height:40px;line-height:40px;font-size:15.8px;color:#12A050;transform:scaleX(0.987596635799847);transform-origin:0 0;-webkit-text-stroke:0.3px #12A050;">9779.0</span>
<span style="left:643.30px;top:803.85px;height:40px;line-height:40px;font-size:15.8px;color:#12A050;transform:scaleX(0.987596635799847);transform-origin:0 0;-webkit-text-stroke:0.3px #12A050;">9821.0</span>
<span style="left:724.70px;top:803.85px;height:40px;line-height:40px;font-size:15.8px;color:#111111;transform:scaleX(0.987596635799847);transform-origin:0 0;-webkit-text-stroke:0.3px #111111;">9883.0</span>
<span style="left:805.90px;top:803.85px;height:40px;line-height:40px;font-size:15.8px;color:#E01219;transform:scaleX(0.987596635799847);transform-origin:0 0;-webkit-text-stroke:0.3px #E01219;">9925.0</span>
<span style="left:887.10px;top:803.85px;height:40px;line-height:40px;font-size:15.8px;color:#E01219;transform:scaleX(0.987596635799847);transform-origin:0 0;-webkit-text-stroke:0.3px #E01219;">9987.0</span>
<span style="left:1008.48px;top:803.85px;height:40px;line-height:40px;font-size:15.8px;color:#111111;transform:scaleX(0.9972131753013465);transform-origin:0 0;-webkit-text-stroke:0.3px #111111;">46.8</span>
<span style="left:1076.28px;top:803.85px;height:40px;line-height:40px;font-size:15.8px;color:#111111;transform:scaleX(1.0143);transform-origin:0 0;-webkit-text-stroke:0.3px #111111;">Short Buildup</span>
<div style="left:0.00px;top:837.50px;width:1200.00px;height:27.00px;background:#FFFFFF;"></div>
<span style="left:18.85px;top:832.10px;height:40px;line-height:40px;font-size:15.8px;color:#111111;transform:scaleX(0.952143015767266);transform-origin:0 0;-webkit-text-stroke:0.3px #111111;">Guar seed</span>
<span style="left:196.79px;top:832.10px;height:40px;line-height:40px;font-size:15.8px;color:#111111;-webkit-text-stroke:0.3px #111111;">Sep-25</span>
<span style="left:330.76px;top:832.10px;height:40px;line-height:40px;font-size:15.8px;color:#111111;transform:scaleX(1.004950641804761);transform-origin:0 0;-webkit-text-stroke:0.3px #111111;">5287</span>
<span style="left:404.87px;top:832.10px;height:40px;line-height:40px;font-size:15.8px;color:#111111;transform:scaleX(1.0388);transform-origin:0 0;-webkit-text-stroke:0.3px #111111;">Down</span>
<span style="left:480.68px;top:832.10px;height:40px;line-height:40px;font-size:15.8px;color:#111111;transform:scaleX(0.987596635799847);transform-origin:0 0;-webkit-text-stroke:0.3px #111111;">5325.5</span>
<span style="left:561.68px;top:832.10px;height:40px;line-height:40px;font-size:15.8px;color:#12A050;transform:scaleX(0.987596635799847);transform-origin:0 0;-webkit-text-stroke:0.3px #12A050;">5244.3</span>
<span style="left:643.37px;top:832.10px;height:40px;line-height:40px;font-size:15.8px;color:#12A050;transform:scaleX(0.9909218769978265);transform-origin:0 0;-webkit-text-stroke:0.3px #12A050;">5265.7</span>
<span style="left:724.78px;top:832.10px;height:40px;line-height:40px;font-size:15.8px;color:#111111;transform:scaleX(0.987596635799847);transform-origin:0 0;-webkit-text-stroke:0.3px #111111;">5301.3</span>
<span style="left:805.97px;top:832.10px;height:40px;line-height:40px;font-size:15.8px;color:#E01219;transform:scaleX(0.9909218769978265);transform-origin:0 0;-webkit-text-stroke:0.3px #E01219;">5322.7</span>
<span style="left:887.18px;top:832.10px;height:40px;line-height:40px;font-size:15.8px;color:#E01219;transform:scaleX(0.987596635799847);transform-origin:0 0;-webkit-text-stroke:0.3px #E01219;">5358.3</span>
<span style="left:1008.49px;top:832.10px;height:40px;line-height:40px;font-size:15.8px;color:#111111;transform:scaleX(0.9945750452079567);transform-origin:0 0;-webkit-text-stroke:0.3px #111111;">46.0</span>
<span style="left:1076.28px;top:832.10px;height:40px;line-height:40px;font-size:15.8px;color:#111111;transform:scaleX(1.0143);transform-origin:0 0;-webkit-text-stroke:0.3px #111111;">Short Buildup</span>
<div style="left:1056.50px;top:34.00px;width:1.70px;height:456.00px;background:#0a0a14;"></div>
<div style="left:1056.50px;top:488.00px;width:1.70px;height:3.30px;background:#0a0a14;"></div>
<div style="left:1056.50px;top:523.80px;width:1.70px;height:341.20px;background:#0a0a14;"></div>
<div style="left:0.00px;top:0.00px;width:1200.00px;height:1.20px;background:#0a0a14;"></div>
<div style="left:0.00px;top:0.00px;width:1.40px;height:867.00px;background:#0a0a14;"></div>
<div style="left:1198.20px;top:0.00px;width:1.80px;height:867.00px;background:#0a0a14;"></div>
<div style="left:0.00px;top:864.80px;width:1200.00px;height:2.20px;background:#0a0a14;"></div>
<div style="left:982.75px;top:1.00px;width:213.25px;height:33.00px;background:#FCFCFC;"></div>
<svg style="position:absolute;left:982.75px;top:1.00px" width="213.25" height="33.00" viewBox="0 0 213 33" preserveAspectRatio="none">
<rect x="17.5" y="5.9" width="19.2" height="23.4" rx="0.8" fill="#F4A024"/>
<rect x="6" y="2.2" width="13.3" height="23.4" rx="0.8" fill="#D7262C"/>
<g stroke="#F5784A" stroke-width="1.1" fill="none"><path d="M2.4 21.9 L20.3 21.9 M11.6 12.7 L11.6 21.9 M11.6 12.7 L7 21.9 M11.6 12.7 L20.3 21.9 M6.4 12.2 L11.6 12.7 L18.4 10"/></g>
<g stroke="#DE6614" stroke-width="1.2" fill="none"><path d="M21.4 15.6 L34.7 15.6 M27.5 8.1 L21.4 15.6 M27.5 8.1 L34.7 15.6 M27.5 8.1 L27.5 15.6"/></g>
<text x="22" y="24.8" font-family="Liberation Sans" font-weight="bold" font-size="13.6" fill="#4B3F66" textLength="94.7" lengthAdjust="spacingAndGlyphs">commodities</text>
<text x="116.7" y="24.8" font-family="Liberation Sans" font-weight="bold" font-size="13.6" fill="#E9A33C" textLength="89.6" lengthAdjust="spacingAndGlyphs">control.com</text>
</svg>
<div style="left:531.40px;top:239.00px;width:245.80px;height:26.80px;background:#FCFCFC;"></div>
<svg style="position:absolute;left:531.40px;top:239.00px" width="245.80" height="26.80" viewBox="0 0 213 33" preserveAspectRatio="none">
<rect x="17.5" y="5.9" width="19.2" height="23.4" rx="0.8" fill="#F4A024"/>
<rect x="6" y="2.2" width="13.3" height="23.4" rx="0.8" fill="#D7262C"/>
<g stroke="#F5784A" stroke-width="1.1" fill="none"><path d="M2.4 21.9 L20.3 21.9 M11.6 12.7 L11.6 21.9 M11.6 12.7 L7 21.9 M11.6 12.7 L20.3 21.9 M6.4 12.2 L11.6 12.7 L18.4 10"/></g>
<g stroke="#DE6614" stroke-width="1.2" fill="none"><path d="M21.4 15.6 L34.7 15.6 M27.5 8.1 L21.4 15.6 M27.5 8.1 L34.7 15.6 M27.5 8.1 L27.5 15.6"/></g>
<text x="22" y="24.8" font-family="Liberation Sans" font-weight="bold" font-size="13.6" fill="#4B3F66" textLength="94.7" lengthAdjust="spacingAndGlyphs">commodities</text>
<text x="116.7" y="24.8" font-family="Liberation Sans" font-weight="bold" font-size="13.6" fill="#E9A33C" textLength="89.6" lengthAdjust="spacingAndGlyphs">control.com</text>
</svg>
<div style="left:1.40px;top:491.50px;width:1.60px;height:32.30px;background:#FCFCFC;"></div>
<div style="left:2.50px;top:491.50px;width:235.20px;height:32.30px;background:#FCFCFC;"></div>
<svg style="position:absolute;left:2.50px;top:491.50px" width="235.20" height="32.30" viewBox="0 0 213 33" preserveAspectRatio="none">
<rect x="17.5" y="5.9" width="19.2" height="23.4" rx="0.8" fill="#F4A024"/>
<rect x="6" y="2.2" width="13.3" height="23.4" rx="0.8" fill="#D7262C"/>
<g stroke="#F5784A" stroke-width="1.1" fill="none"><path d="M2.4 21.9 L20.3 21.9 M11.6 12.7 L11.6 21.9 M11.6 12.7 L7 21.9 M11.6 12.7 L20.3 21.9 M6.4 12.2 L11.6 12.7 L18.4 10"/></g>
<g stroke="#DE6614" stroke-width="1.2" fill="none"><path d="M21.4 15.6 L34.7 15.6 M27.5 8.1 L21.4 15.6 M27.5 8.1 L34.7 15.6 M27.5 8.1 L27.5 15.6"/></g>
<text x="22" y="24.8" font-family="Liberation Sans" font-weight="bold" font-size="13.6" fill="#4B3F66" textLength="94.7" lengthAdjust="spacingAndGlyphs">commodities</text>
<text x="116.7" y="24.8" font-family="Liberation Sans" font-weight="bold" font-size="13.6" fill="#E9A33C" textLength="89.6" lengthAdjust="spacingAndGlyphs">control.com</text>
</svg>
<div style="left:978.25px;top:491.50px;width:220.00px;height:32.30px;background:#FCFCFC;"></div>
<svg style="position:absolute;left:978.25px;top:491.50px" width="220.00" height="32.30" viewBox="0 0 213 33" preserveAspectRatio="none">
<rect x="17.5" y="5.9" width="19.2" height="23.4" rx="0.8" fill="#F4A024"/>
<rect x="6" y="2.2" width="13.3" height="23.4" rx="0.8" fill="#D7262C"/>
<g stroke="#F5784A" stroke-width="1.1" fill="none"><path d="M2.4 21.9 L20.3 21.9 M11.6 12.7 L11.6 21.9 M11.6 12.7 L7 21.9 M11.6 12.7 L20.3 21.9 M6.4 12.2 L11.6 12.7 L18.4 10"/></g>
<g stroke="#DE6614" stroke-width="1.2" fill="none"><path d="M21.4 15.6 L34.7 15.6 M27.5 8.1 L21.4 15.6 M27.5 8.1 L34.7 15.6 M27.5 8.1 L27.5 15.6"/></g>
<text x="22" y="24.8" font-family="Liberation Sans" font-weight="bold" font-size="13.6" fill="#4B3F66" textLength="94.7" lengthAdjust="spacingAndGlyphs">commodities</text>
<text x="116.7" y="24.8" font-family="Liberation Sans" font-weight="bold" font-size="13.6" fill="#E9A33C" textLength="89.6" lengthAdjust="spacingAndGlyphs">control.com</text>
</svg>
<div style="left:537.40px;top:749.00px;width:246.40px;height:31.00px;background:#FCFCFC;"></div>
<svg style="position:absolute;left:537.40px;top:748.80px" width="246.40" height="32.60" viewBox="0 0 213 33" preserveAspectRatio="none">
<rect x="17.5" y="5.9" width="19.2" height="23.4" rx="0.8" fill="#F4A024"/>
<rect x="6" y="2.2" width="13.3" height="23.4" rx="0.8" fill="#D7262C"/>
<g stroke="#F5784A" stroke-width="1.1" fill="none"><path d="M2.4 21.9 L20.3 21.9 M11.6 12.7 L11.6 21.9 M11.6 12.7 L7 21.9 M11.6 12.7 L20.3 21.9 M6.4 12.2 L11.6 12.7 L18.4 10"/></g>
<g stroke="#DE6614" stroke-width="1.2" fill="none"><path d="M21.4 15.6 L34.7 15.6 M27.5 8.1 L21.4 15.6 M27.5 8.1 L34.7 15.6 M27.5 8.1 L27.5 15.6"/></g>
<text x="22" y="24.8" font-family="Liberation Sans" font-weight="bold" font-size="13.6" fill="#4B3F66" textLength="94.7" lengthAdjust="spacingAndGlyphs">commodities</text>
<text x="116.7" y="24.8" font-family="Liberation Sans" font-weight="bold" font-size="13.6" fill="#E9A33C" textLength="89.6" lengthAdjust="spacingAndGlyphs">control.com</text>
</svg>
</body></html>
